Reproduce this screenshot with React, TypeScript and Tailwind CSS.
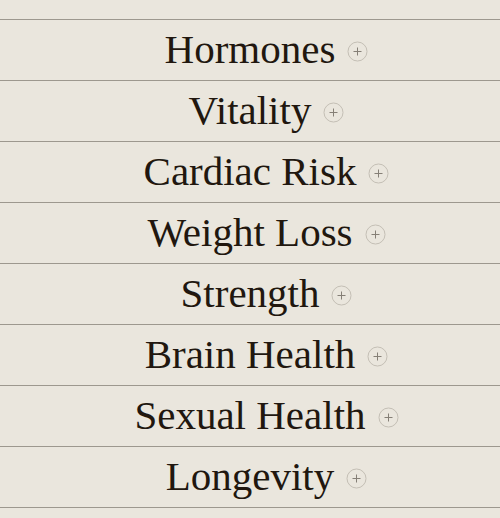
const items = [
  "Hormones",
  "Vitality",
  "Cardiac Risk",
  "Weight Loss",
  "Strength",
  "Brain Health",
  "Sexual Health",
  "Longevity",
]

const PlusCircle = () => (
  <svg width="21" height="21" viewBox="0 0 21 21" fill="none" className="shrink-0">
    <circle cx="10.5" cy="10.5" r="9.5" stroke="#c4bfb5" strokeWidth="1" />
    <path d="M10.5 6.5v8M6.5 10.5h8" stroke="#857f76" strokeWidth="1" />
  </svg>
)

const App = () => {
  return <div className="min-h-[518px] w-[500px] bg-[#eae6dd] pt-[19px]">
    <ul className="border-b border-[#9d988e]">
      {items.map((item) => (
        <li key={item} className="grid h-[61px] grid-cols-[1fr_auto_1fr] items-center border-t border-[#9d988e]">
          <span />
          <span className="pb-[2px] text-[41px] leading-none text-[#21170f]" style={{ fontFamily: '"Liberation Serif", serif' }}>{item}</span>
          <span className="flex pl-3 pt-[2px]">
            <PlusCircle />
          </span>
        </li>
      ))}
    </ul>
  </div>
}

export default App
